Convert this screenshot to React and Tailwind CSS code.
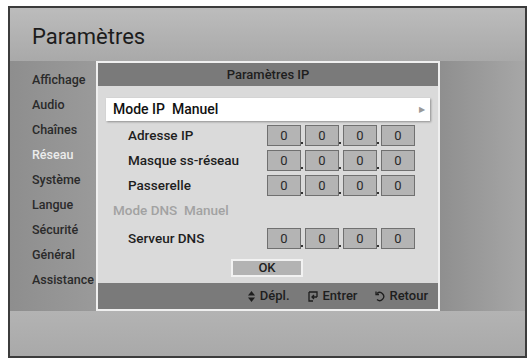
import React from "react";

const font = { fontFamily: "Roboto, 'Liberation Sans', sans-serif" };

function IpBoxes() {
  return (
    <div className="flex gap-[4px]">
      {[0, 1, 2, 3].map((i) => (
        <div
          key={i}
          className="relative flex h-[21px] w-[34px] items-center justify-center border border-[#707070] bg-[#b4b4b4] text-[13px] text-[#2a2a2a]"
        >
          0
          {i < 3 && (
            <span className="absolute bottom-[1px] right-[-3px] h-[2px] w-[2px] bg-[#333]" />
          )}
        </div>
      ))}
    </div>
  );
}

function Row({ label, gray }) {
  return (
    <div className="flex h-[25px] items-center">
      <div
        className={
          gray
            ? "w-[161px] pl-[7px] text-[13.5px] font-medium text-[#a2a2a2]"
            : "w-[161px] pl-[22px] text-[13.5px] font-medium text-[#1e1e1e]"
        }
      >
        {label}
      </div>
      {!gray && <IpBoxes />}
    </div>
  );
}

export default function App() {
  const menu = [
    "Affichage",
    "Audio",
    "Chaînes",
    "Réseau",
    "Système",
    "Langue",
    "Sécurité",
    "Général",
    "Assistance",
  ];
  return (
    <div className="h-[362px] w-[532px] bg-white pl-[8px] pt-[6px]" style={font}>
      <div className="flex h-[352px] w-[519px] flex-col border-2 border-[#3c3c3c] bg-[#a8a8a8]">
        <div className="flex h-[53px] items-end bg-gradient-to-b from-[#bcbcbc] to-[#a9a9a9] pb-[8px] pl-[22px] text-[22px] text-[#1c1c1c]">
          Paramètres
        </div>
        <div className="flex h-[250px]">
          <div className="flex w-[86px] flex-col bg-gradient-to-r from-[#8e8e8e] to-[#9a9a9a] pl-[22px] pt-[7px] text-[12.5px] font-medium">
            {menu.map((m) => (
              <div
                key={m}
                className={
                  m === "Réseau"
                    ? "flex h-[25px] items-center text-[#ececec]"
                    : "flex h-[25px] items-center text-[#2a2a2a]"
                }
              >
                {m}
              </div>
            ))}
          </div>
          <div className="flex w-[344px] flex-col border-2 border-[#efefef] bg-[#dadada]">
            <div className="flex h-[23px] items-center justify-center bg-[#7a7a7a] text-[13px] font-medium text-[#1e1e1e]">
              Paramètres IP
            </div>
            <div className="flex flex-1 flex-col px-[8px] pt-[12px]">
              <div className="flex h-[23px] items-center justify-between bg-white pl-[7px] pr-[5px] text-[14px] font-medium text-[#111] shadow-[1px_1px_2px_rgba(0,0,0,0.35)]">
                <span>Mode IP&nbsp;&nbsp;Manuel</span>
                <span className="text-[8px] text-[#999]">▶</span>
              </div>
              <div className="mt-[2px] flex flex-col">
                <Row label="Adresse IP" />
                <Row label="Masque ss-réseau" />
                <Row label="Passerelle" />
                <Row label={"Mode DNS\u00a0\u00a0Manuel"} gray />
                <div className="h-[3px]" />
                <Row label="Serveur DNS" />
              </div>
              <div className="mt-[8px] flex justify-center pr-[2px]">
                <div className="flex h-[18px] w-[72px] items-center justify-center border-2 border-[#f2f2f2] bg-[#b3b3b3] text-[13px] font-medium text-[#1e1e1e]">
                  OK
                </div>
              </div>
            </div>
            <div className="mt-[4px] flex h-[26px] items-center justify-end gap-[18px] bg-[#7a7a7a] pr-[10px] text-[13px] font-medium text-[#1e1e1e]">
              <span className="flex items-center gap-[5px]">
                <svg width="7" height="11" viewBox="0 0 7 11" fill="#1e1e1e">
                  <path d="M3.5 0L7 4.5H0z" />
                  <path d="M3.5 11L7 6.5H0z" />
                </svg>
                Dépl.
              </span>
              <span className="flex items-center gap-[4px]">
                <svg width="11" height="11" viewBox="0 0 11 11" fill="none" stroke="#1e1e1e" strokeWidth="1.3">
                  <path d="M1 1h8v5" />
                  <path d="M1 1v9h4" />
                  <path d="M9 6H4M6 4L4 6l2 2" />
                </svg>
                Entrer
              </span>
              <span className="flex items-center gap-[4px]">
                <svg width="10" height="11" viewBox="0 0 10 11" fill="none" stroke="#1e1e1e" strokeWidth="1.3">
                  <path d="M2 2.5A4 4 0 1 1 2 8.5" />
                  <path d="M1 0.5v3h3" />
                </svg>
                Retour
              </span>
            </div>
          </div>
          <div className="flex-1 bg-gradient-to-r from-[#8f8f8f] to-[#a7a7a7]" />
        </div>
        <div className="flex-1 bg-gradient-to-b from-[#b3b3b3] to-[#a9a9a9]" />
      </div>
    </div>
  );
}
